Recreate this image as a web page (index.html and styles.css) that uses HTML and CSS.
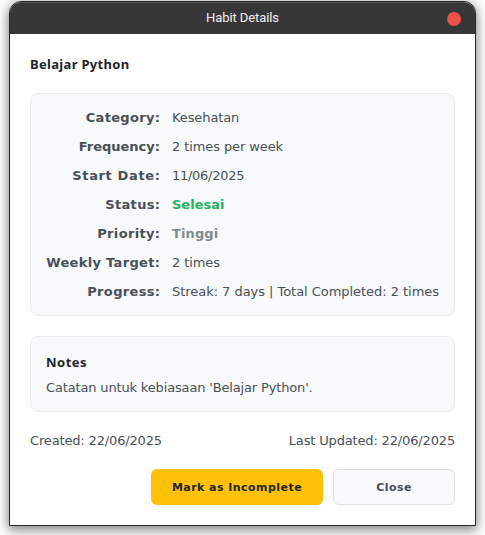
FILE: index.html
```html
<!DOCTYPE html>
<html lang="id">
<head>
<meta charset="utf-8">
<title>Habit Details</title>
<link rel="stylesheet" href="styles.css">
</head>
<body>
<main class="window">
  <header class="titlebar">
    <span class="titlebar-text">Habit Details</span>
    <span class="close-dot"></span>
  </header>
  <div class="content">
    <h1 class="heading">Belajar Python</h1>
    <dl class="card details">
      <dt>Category:</dt><dd>Kesehatan</dd>
      <dt class="compact">Frequency:</dt><dd>2 times per week</dd>
      <dt class="wide">Start Date:</dt><dd class="date">11/06/2025</dd>
      <dt>Status:</dt><dd class="done">Selesai</dd>
      <dt>Priority:</dt><dd class="priority">Tinggi</dd>
      <dt>Weekly Target:</dt><dd>2 times</dd>
      <dt>Progress:</dt><dd class="progress">Streak: 7 days | Total Completed: 2 times</dd>
    </dl>
    <section class="card notes">
      <h2 class="heading">Notes</h2>
      <p>Catatan untuk kebiasaan 'Belajar Python'.</p>
    </section>
    <div class="dates">
      <span>Created: 22/06/2025</span>
      <span>Last Updated: 22/06/2025</span>
    </div>
    <div class="actions">
      <button class="btn btn-warning">Mark as Incomplete</button>
      <button class="btn btn-light">Close</button>
    </div>
  </div>
</main>
</body>
</html>
```
FILE: styles.css
```css
* { box-sizing: border-box; }
body {
  margin: 0;
  height: 535px;
  overflow: hidden;
  padding: 1px 9px 9px;
  background: #fff;
  font: 13px/17px "DejaVu Sans", sans-serif;
  color: #495057;
}
.window {
  height: 525px;
  border: 1px solid #272727;
  border-radius: 12px 12px 0 0;
  background: #fff;
  box-shadow: 0 3px 12px 1px rgba(0, 0, 0, .5);
}
.titlebar {
  height: 32px;
  display: grid;
  grid-template-columns: 1fr auto 1fr;
  align-items: center;
  padding-right: 14px;
  border-radius: 11px 11px 0 0;
  background: #373737;
  border-top: 1px solid #515151;
}
.titlebar-text {
  grid-column: 2;
  padding: 0 0 2px 14px;
  font: 13px/16px Roboto, sans-serif;
  letter-spacing: -.1px;
  color: #f2f2f2;
}
.close-dot {
  justify-self: end;
  width: 14px;
  height: 14px;
  border-radius: 50%;
  background: #e9524a;
}
.content { padding: 20px; }
.heading {
  margin: 0;
  font: bold 13px/20px "Noto Sans", sans-serif;
  letter-spacing: .32px;
  color: #212529;
}
.card {
  border: 1px solid #e9ecef;
  border-radius: 8px;
  background: #f8f9fa;
  padding: 15px;
}
.details {
  margin: 19px 0 20px;
  height: 223px;
  display: grid;
  grid-template-columns: 114px 1fr;
  grid-auto-rows: 17px;
  gap: 12px;
  white-space: nowrap;
}
.details dt { font-weight: bold; text-align: right; letter-spacing: .33px; margin-right: -.33px; }
.details .compact { letter-spacing: 0; margin-right: 0; }
.details .wide { letter-spacing: .64px; margin-right: -.64px; }
.details dd { margin: 0; letter-spacing: -.1px; }
.details .date { letter-spacing: -.28px; }
.details .progress { letter-spacing: -.04px; }
.details .done, .details .priority { font-weight: bold; letter-spacing: 0; }
.details .done { color: #27ae60; }
.details .priority { color: #7f8c8d; letter-spacing: .1px; }
.notes { height: 76px; }
.notes .heading { letter-spacing: .5px; }
.notes p { margin: 7px 0 0; letter-spacing: -.155px; }
.dates {
  display: flex;
  justify-content: space-between;
  margin: 20px 0;
  letter-spacing: -.155px;
}
.actions {
  display: flex;
  justify-content: flex-end;
  gap: 10px;
}
.btn {
  height: 36px;
  padding: 1px 0 0;
  border: 0;
  border-radius: 6px;
  font: bold 11px/14px "DejaVu Sans", sans-serif;
  letter-spacing: .45px;
}
.btn-warning { width: 172px; background: #ffc107; color: #212529; }
.btn-light { width: 122px; background: #f8f9fa; border: 1px solid #dee2e6; color: #495057; }
```
